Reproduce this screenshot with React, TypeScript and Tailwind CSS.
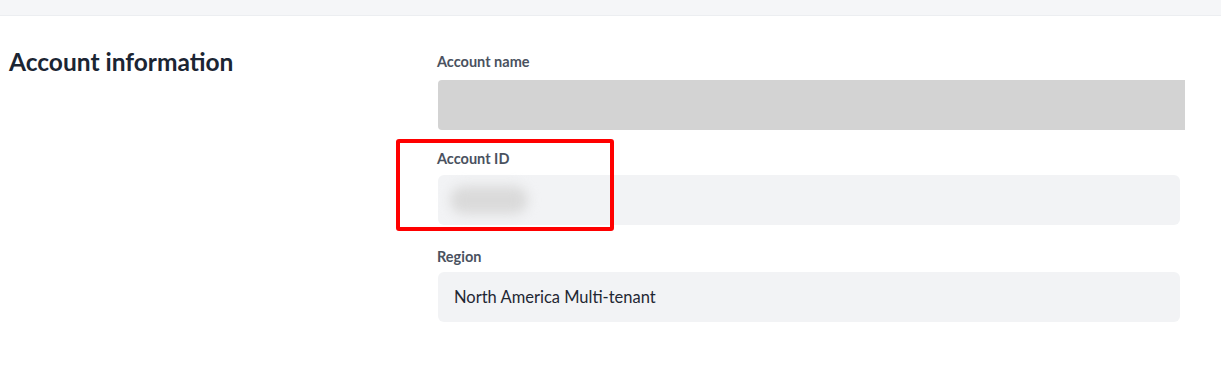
export default function App() {
  return (
    <div className="relative w-[1221px] h-[381px] bg-white font-['Lato',sans-serif]">
      <div className="h-[16px] bg-[#f5f6f8] border-b border-[#eceef1]" />
      <div className="flex pt-[31px]">
        <div className="w-[437px] pl-[9px]">
          <h2 className="text-[24.5px] leading-[30px] font-bold text-[#1b2533]">Account information</h2>
        </div>
        <div className="flex flex-col">
          <label className="text-[14.5px] leading-[20px] font-bold text-[#4a5260] mt-[5px]">Account name</label>
          <div className="mt-[8px] w-[747px] h-[50px] ml-[1px] bg-[#d3d3d3] rounded-l-[4px]" />

          <label className="mt-[19px] text-[14.5px] leading-[20px] font-bold text-[#4a5260]">Account ID</label>
          <div className="mt-[6px] w-[742px] h-[50px] ml-[1px] rounded-[6px] bg-[#f2f3f5] flex items-center pl-[12px]">
            <div className="w-[78px] h-[28px] rounded-full bg-[#dadada] blur-[6px]" />
          </div>

          <label className="mt-[22px] text-[14.5px] leading-[20px] font-bold text-[#4a5260]">Region</label>
          <div className="mt-[5px] w-[742px] h-[50px] ml-[1px] rounded-[6px] bg-[#f2f3f5] flex items-center pl-[16px] text-[16.5px] text-[#1f2733]">
            North America Multi-tenant
          </div>
        </div>
      </div>
      <div className="absolute left-[396px] top-[139px] w-[218px] h-[92px] border-[4px] border-[#ff0000] rounded-[3px]" />
    </div>
  );
}
